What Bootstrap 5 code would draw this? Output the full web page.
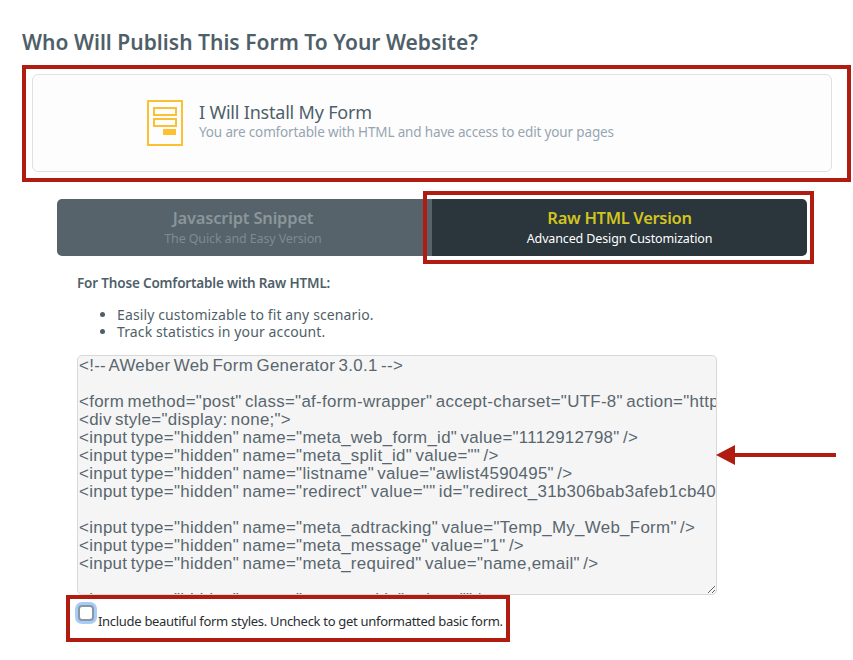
<!DOCTYPE html>
<html lang="en">
<head>
<meta charset="utf-8">
<title>Publish form</title>
<link href="https://cdn.jsdelivr.net/npm/bootstrap@5.3.0/dist/css/bootstrap.min.css" rel="stylesheet">
<style>
html, body { height: 660px; overflow: hidden; }
body { background: #fff; font-family: "Noto Sans", sans-serif; color: #4c5d66; }
.page-wrap { position: relative; width: 853px; height: 660px; padding: 28px 21px 0 22px; }
.page-title { font-size: 21px; line-height: 28px; font-weight: 600; color: #4f5f69; margin: 0 0 18px; letter-spacing: .02px; }
.install-box { margin: 0 0 0 10px; height: 98px; border: 1px solid #dfe1e3; border-radius: 6px; background: #fdfdfe; padding-left: 114px; }
.install-icon { width: 36px; height: 46px; flex: none; margin-right: 16px; }
.install-text { margin-top: -4px; }
.install-title { font-size: 18px; line-height: 22px; color: #4f5f69; letter-spacing: -.2px; }
.install-sub { font-size: 13.5px; line-height: 18px; color: #97a5b1; letter-spacing: -.15px; }
.tab-row { margin: 27px 25px 0 35px; height: 57px; border-radius: 5px; overflow: hidden; }
.tab-cell { text-align: center; }
.tab-off { width: 372px; background: #56636a; color: #8b959b; }
.tab-on { flex: 1; background: #2a353c; color: #fff; border-left: 3px solid #56636a; }
.tab-name { font-size: 16.5px; line-height: 22px; font-weight: 600; letter-spacing: -.3px; }
.tab-off .tab-name { letter-spacing: -.2px; }
.tab-desc { font-size: 12.5px; line-height: 18px; letter-spacing: -.13px; margin-top: 1px; }
.tab-on .tab-name { color: #d2c41e; }
.tab-off .tab-desc { color: #7f8a90; }
.raw-head { margin: 18px 0 0 55px; font-size: 13.5px; line-height: 18px; font-weight: 600; color: #4f5f69; letter-spacing: -.17px; }
.raw-list { margin: 14px 0 0 55px; padding-left: 40px; font-size: 14px; line-height: 17px; color: #4f5f69; letter-spacing: .12px; }
.code-area { display: block; margin: 15px 0 0 55px; width: 640px; height: 240px; padding: 1px 1px 0; border: 1px solid #d6d8da; border-radius: 5px; background: #f5f5f5; color: #59666e; font-family: "Liberation Sans", sans-serif; font-size: 16.9px; line-height: 18px; letter-spacing: .3px; word-spacing: -1.6px; white-space: pre; overflow: hidden; resize: both; outline: none; }
.opt-row { margin: 9px 0 0 56px; align-items: flex-start; }
.opt-check { appearance: none; width: 16px; height: 16px; flex: none; margin: 1px 4px 0 0; border: 2px solid #8a97a3; border-radius: 4px; background: #fff; box-shadow: 0 0 0 3px #a6cdf8; }
.opt-label { margin-top: 8px; font-size: 13px; line-height: 18px; color: #2a2f33; letter-spacing: -.3px; }
.mark-box { position: absolute; border: 4px solid #b01c10; pointer-events: none; }
.mark-install { left: 22px; top: 65px; width: 829px; height: 117px; }
.mark-raw { left: 423px; top: 191px; width: 391px; height: 73px; }
.mark-opt { left: 66px; top: 595px; width: 444px; height: 47px; }
.mark-arrow { position: absolute; left: 715px; top: 444px; width: 122px; height: 22px; }
</style>
</head>
<body>
<div class="page-wrap">
  <h1 class="page-title">Who Will Publish This Form To Your Website?</h1>

  <div class="install-box d-flex align-items-center">
    <svg class="install-icon" viewBox="0 0 36 46" aria-hidden="true">
      <rect x="1" y="1" width="34" height="44" fill="none" stroke="#fcc133" stroke-width="2"/>
      <rect x="7" y="8" width="22" height="7" fill="none" stroke="#fcc133" stroke-width="2"/>
      <rect x="7" y="19" width="22" height="7" fill="none" stroke="#fcc133" stroke-width="2"/>
      <rect x="16" y="29" width="13" height="6" fill="#fcc133"/>
    </svg>
    <div class="install-text">
      <div class="install-title">I Will Install My Form</div>
      <div class="install-sub">You are comfortable with HTML and have access to edit your pages</div>
    </div>
  </div>

  <div class="tab-row d-flex">
    <div class="tab-cell tab-off d-flex flex-column justify-content-center">
      <div class="tab-name">Javascript Snippet</div>
      <div class="tab-desc">The Quick and Easy Version</div>
    </div>
    <div class="tab-cell tab-on d-flex flex-column justify-content-center">
      <div class="tab-name">Raw HTML Version</div>
      <div class="tab-desc">Advanced Design Customization</div>
    </div>
  </div>

  <div class="raw-head">For Those Comfortable with Raw HTML:</div>
  <ul class="raw-list mb-0">
    <li>Easily customizable to fit any scenario.</li>
    <li>Track statistics in your account.</li>
  </ul>

  <textarea class="code-area" spellcheck="false" wrap="off" readonly>&lt;!-- AWeber Web Form Generator 3.0.1 --&gt;

&lt;form method="post" class="af-form-wrapper" accept-charset="UTF-8" action="https://www.aweber.com/scripts/addlead.pl"&gt;
&lt;div style="display: none;"&gt;
&lt;input type="hidden" name="meta_web_form_id" value="1112912798" /&gt;
&lt;input type="hidden" name="meta_split_id" value="" /&gt;
&lt;input type="hidden" name="listname" value="awlist4590495" /&gt;
&lt;input type="hidden" name="redirect" value="" id="redirect_31b306bab3afeb1cb401" /&gt;

&lt;input type="hidden" name="meta_adtracking" value="Temp_My_Web_Form" /&gt;
&lt;input type="hidden" name="meta_message" value="1" /&gt;
&lt;input type="hidden" name="meta_required" value="name,email" /&gt;

&lt;input type="hidden" name="meta_tooltip" value="" /&gt;
</textarea>

  <div class="opt-row d-flex">
    <input class="opt-check" type="checkbox" id="opt-styles">
    <label class="opt-label" for="opt-styles">Include beautiful form styles. Uncheck to get unformatted basic form.</label>
  </div>

  <div class="mark-box mark-install"></div>
  <div class="mark-box mark-raw"></div>
  <div class="mark-box mark-opt"></div>
  <svg class="mark-arrow" viewBox="0 0 122 22" aria-hidden="true">
    <polygon points="1,11 20,1 20,9 121,9 121,13 20,13 20,21" fill="#b01c10"/>
  </svg>
</div>
<script src="https://cdn.jsdelivr.net/npm/bootstrap@5.3.0/dist/js/bootstrap.bundle.min.js"></script>
</body>
</html>
